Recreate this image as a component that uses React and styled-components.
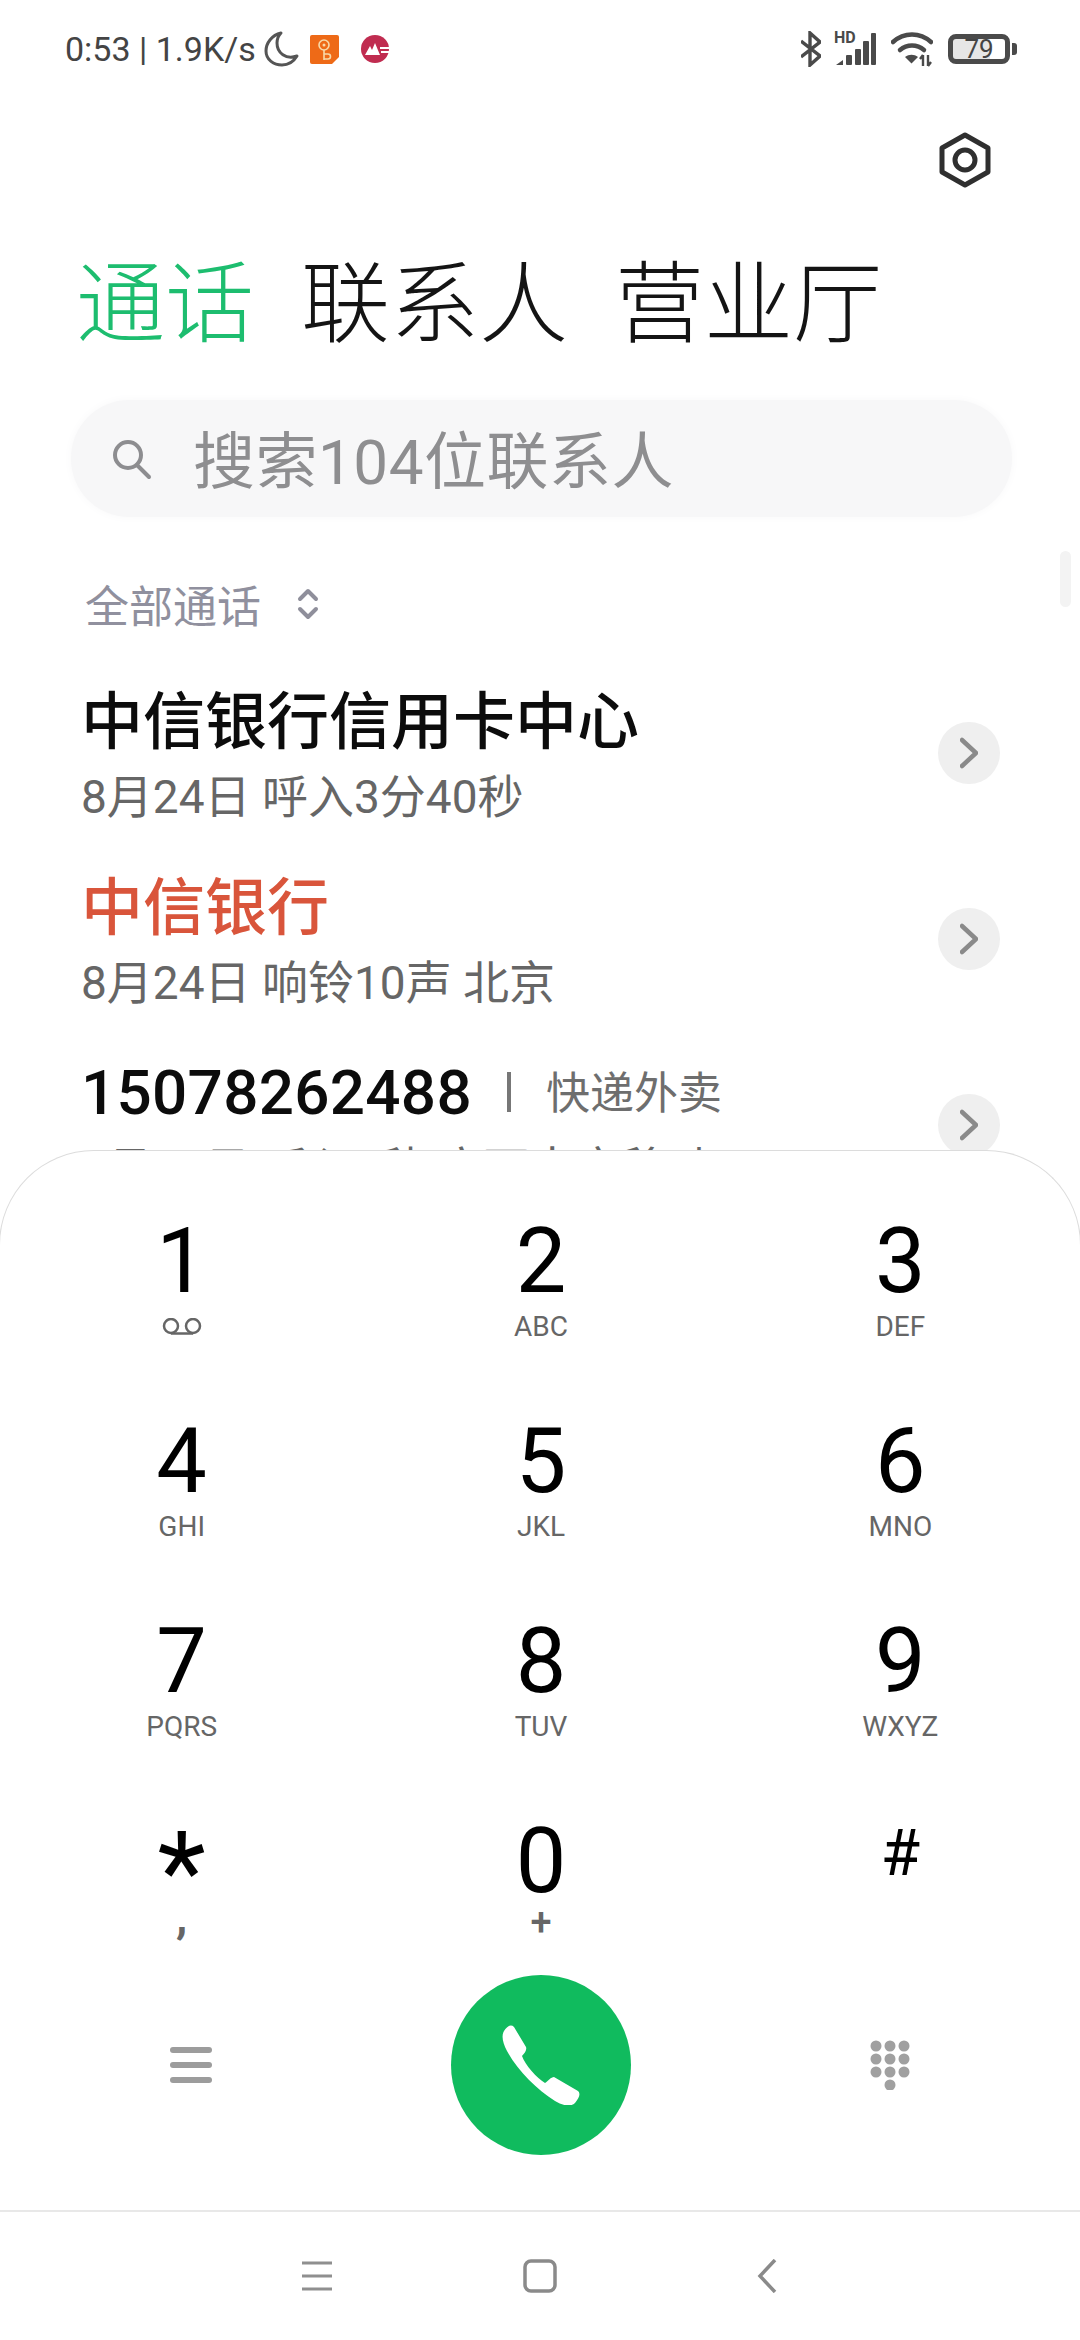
import React from "react";
import styled, { createGlobalStyle } from "styled-components";

const FONT = `Roboto, "Noto Sans CJK SC", sans-serif`;

const GlobalStyle = createGlobalStyle`
  html, body {
    margin: 0;
    padding: 0;
    background: #fff;
  }
  * {
    box-sizing: border-box;
  }
`;

const Page = styled.div`
  position: relative;
  width: 1080px;
  height: 2340px;
  overflow: hidden;
  background: #fff;
  font-family: ${FONT};
`;

const StatusBar = styled.div`
  display: flex;
  align-items: center;
  justify-content: space-between;
  height: 100px;
  padding: 0 70px 2px 65px;
  color: #444;
`;

const StatusGroup = styled.div`
  display: flex;
  align-items: center;
`;

const StatusText = styled.span`
  font-size: 34px;
  line-height: 40px;
  margin-right: 8px;
  white-space: nowrap;
`;

const AppIcon = styled.svg`
  display: block;
  margin-left: ${({ $gap }) => $gap}px;
`;

const SignalBox = styled.div`
  position: relative;
  width: 42px;
  height: 34px;
  margin-left: 13px;
`;

const HdLabel = styled.span`
  position: absolute;
  left: 0;
  top: -2px;
  font-size: 16px;
  line-height: 16px;
  font-weight: 700;
  color: #4a4a4a;
`;

const Battery = styled.div`
  position: relative;
  display: flex;
  align-items: center;
  justify-content: center;
  width: 62px;
  height: 30px;
  margin-left: 15px;
  border: 5px solid #4a4a4a;
  border-radius: 8px;
  font-size: 26px;
  color: #444;
  background: linear-gradient(to right, #e6e6e6 0 72%, #fff 72%);

  &::after {
    content: "";
    position: absolute;
    right: -12px;
    top: 4px;
    width: 5px;
    height: 12px;
    border-radius: 0 3px 3px 0;
    background: #4a4a4a;
  }
`;

const TopBar = styled.div`
  display: flex;
  justify-content: flex-end;
  align-items: center;
  height: 120px;
  padding-right: 88px;
`;

const Tabs = styled.div`
  display: flex;
  align-items: center;
  gap: 47px;
  height: 166px;
  padding: 4px 0 0 76px;
`;

const Tab = styled.div`
  font-size: 89px;
  line-height: 100px;
  font-weight: 300;
  color: ${({ $active }) => ($active ? "#1dbd6f" : "#141414")};
`;

const SearchBar = styled.div`
  display: flex;
  align-items: center;
  height: 117px;
  margin: 14px 68px 0 71px;
  padding-left: 41px;
  border-radius: 58px;
  background: #f7f7f8;
  box-shadow: 0 0 10px #f8f8f9;
`;

const SearchText = styled.span`
  margin-left: 41px;
  padding-top: 8px;
  font-size: 62px;
  line-height: 70px;
  letter-spacing: 0.5px;
  color: #8e8e90;
`;

const Filter = styled.div`
  display: flex;
  align-items: center;
  gap: 36px;
  height: 110px;
  margin-top: 33px;
  padding: 0 0 2px 85px;
  font-size: 44px;
  color: #90909e;
`;

const List = styled.div`
  display: flex;
  flex-direction: column;
`;

const Row = styled.div`
  display: flex;
  align-items: center;
  justify-content: space-between;
  height: 186px;
  padding: 0 80px 0 81px;
`;

const RowBody = styled.div`
  display: flex;
  flex-direction: column;
  gap: 11px;
  margin-top: 5px;
`;

const TitleLine = styled.div`
  display: flex;
  align-items: center;
  height: 72px;
`;

const Title = styled.span`
  margin-bottom: ${({ $number }) => ($number ? 0 : 6)}px;
  font-size: 62px;
  font-weight: 500;
  letter-spacing: ${({ $number }) => ($number ? 0.3 : 0)}px;
  color: ${({ $missed }) => ($missed ? "#d9553b" : "#0c0c0c")};
`;

const Divider = styled.span`
  width: 4px;
  height: 40px;
  margin: 0 35px 0 35px;
  background: #777;
`;

const Tag = styled.span`
  margin-bottom: 4px;
  font-size: 44px;
  color: #6e6e6e;
`;

const Sub = styled.div`
  height: 60px;
  font-size: 46px;
  line-height: 60px;
  color: #666;
  white-space: pre;
`;

const RowArrow = styled.div`
  display: flex;
  align-items: center;
  justify-content: center;
  width: 62px;
  height: 62px;
  border-radius: 50%;
  background: #efefef;
`;

const ScrollThumb = styled.div`
  position: absolute;
  top: 551px;
  right: 9px;
  width: 11px;
  height: 56px;
  border-radius: 6px;
  background: #f3f3f3;
`;

const Panel = styled.div`
  position: absolute;
  left: -1px;
  right: -1px;
  bottom: 0;
  height: 1190px;
  display: flex;
  flex-direction: column;
  padding-top: 61px;
  background: #fff;
  border: 1px solid #dcdcdc;
  border-bottom: none;
  border-radius: 95px 95px 0 0;
`;

const Keys = styled.div`
  display: grid;
  grid-template-columns: repeat(3, 1fr);
  row-gap: 70px;
  padding-left: 2px;
`;

const Key = styled.div`
  display: flex;
  flex-direction: column;
  align-items: center;
  height: 130px;
`;

const Digit = styled.div`
  height: 100px;
  padding-top: ${({ $drop }) => $drop || 0}px;
  font-size: ${({ $size }) => $size || 90}px;
  line-height: ${({ $line }) => $line || 100}px;
  color: #000;
`;

const Letters = styled.div`
  display: flex;
  align-items: center;
  height: ${({ $line }) => $line || 30}px;
  font-size: ${({ $size }) => $size || 28}px;
  font-weight: ${({ $weight }) => $weight || 400};
  line-height: ${({ $line }) => $line || 30}px;
  color: #666;
`;

const Actions = styled.div`
  display: flex;
  align-items: center;
  justify-content: space-between;
  margin-top: 33px;
  padding: 0 170px;
`;

const MenuBars = styled.div`
  display: flex;
  flex-direction: column;
  gap: 9px;
  width: 42px;
`;

const MenuBar = styled.span`
  height: 6px;
  border-radius: 3px;
  background: #9c9c9c;
`;

const CallButton = styled.div`
  display: flex;
  align-items: center;
  justify-content: center;
  width: 180px;
  height: 180px;
  border-radius: 50%;
  background: #10bb5e;
`;

const NavBar = styled.div`
  display: flex;
  align-items: center;
  justify-content: center;
  gap: 185px;
  height: 130px;
  margin-top: auto;
  border-top: 2px solid #e8e8e8;
`;

const STATUS_COLOR = "#4a4a4a";

const MoonIcon = () => (
  <svg width="36" height="36" viewBox="0 0 36 36" fill="none" stroke="#555" strokeWidth="3" strokeLinejoin="round">
    <path d="M17 2C8 4 2 12 2 20c0 9 8 14 16 14 7 0 12-4 15-9-11 4-20-3-20-13 0-4 2-8 4-10z" />
  </svg>
);

const OrangeIcon = () => (
  <AppIcon $gap={10} width="29" height="29" viewBox="0 0 29 29">
    <path d="M2 0h25a2 2 0 0 1 2 2v20l-7 7H2a2 2 0 0 1-2-2V2a2 2 0 0 1 2-2z" fill="#ee6a17" />
    <g fill="none" stroke="#f8d9a8" strokeWidth="1.6">
      <circle cx="14" cy="10" r="5" />
      <path d="M14 15v10M14 19h4a2 2 0 0 1 0 5h-4" />
    </g>
    <circle cx="14" cy="10" r="1.5" fill="#f8d9a8" />
  </AppIcon>
);

const BankIcon = () => (
  <AppIcon $gap={22} width="28" height="28" viewBox="0 0 28 28">
    <circle cx="14" cy="14" r="14" fill="#c02c50" />
    <path d="M4 20l5-9 2 4 3-7 5 12z" fill="#fff" />
    <path d="M19 12h9v2h-9zM20 16h8v2h-8z" fill="#fff" />
  </AppIcon>
);

const Bluetooth = () => (
  <svg width="20" height="36" viewBox="0 0 20 36" fill="none" stroke={STATUS_COLOR} strokeWidth="3.4">
    <path d="M0 10l19 15-10 9V2l10 9L0 26" />
  </svg>
);

const SignalBars = () => (
  <svg width="42" height="34" viewBox="0 0 42 34" fill={STATUS_COLOR}>
    <path d="M2 33l7-5v5z" />
    <rect x="12" y="23" width="6" height="10" rx="1" />
    <rect x="21" y="17" width="6" height="16" rx="1" />
    <rect x="29" y="9" width="6" height="24" rx="1" />
    <rect x="37" y="1" width="5" height="32" rx="1" />
  </svg>
);

const Wifi = () => (
  <AppIcon $gap={15} width="42" height="36" viewBox="0 0 42 36">
    <g fill="none" stroke={STATUS_COLOR} strokeWidth="4.500" strokeLinecap="round">
      <path d="M2 11c11-10 27-10 38 0" />
      <path d="M9 19c7-6 17-6 24 0" />
    </g>
    <path d="M14 26c4-3 9-3 13 0l-6.500 6.500z" fill={STATUS_COLOR} />
    <g stroke={STATUS_COLOR} strokeWidth="2.400" fill="none">
      <path d="M32 24v11M32 24l-3 4" />
      <path d="M37 35V24M37 35l3-4" />
    </g>
  </AppIcon>
);

const GearIcon = () => (
  <svg width="54" height="56" viewBox="0 0 54 56" fill="none" stroke="#2f2f2f" strokeWidth="5" strokeLinejoin="round">
    <path d="M27 3l23 13v24L27 53 4 40V16z" />
    <circle cx="27" cy="28" r="10" />
  </svg>
);

const SearchIcon = () => (
  <svg width="40" height="42" viewBox="0 0 40 42" fill="none" stroke="#8d8d90" strokeWidth="4" strokeLinecap="round">
    <circle cx="16" cy="17" r="13" />
    <path d="M26 28l11 11" />
  </svg>
);

const UpDown = () => (
  <svg width="22" height="32" viewBox="0 0 22 32" fill="none" stroke="#8f8f9b" strokeWidth="4" strokeLinecap="round" strokeLinejoin="round">
    <path d="M3 11l8-8 8 8M3 21l8 8 8-8" />
  </svg>
);

const Chevron = () => (
  <svg width="18" height="32" viewBox="0 0 18 32" fill="none" stroke="#8a8a8a" strokeWidth="4.500" strokeLinecap="round" strokeLinejoin="round">
    <path d="M2 3l14 13L2 29" />
  </svg>
);

const Voicemail = () => (
  <svg width="40" height="18" viewBox="0 0 40 18" fill="none" stroke="#666" strokeWidth="2.500">
    <circle cx="9" cy="8" r="7" />
    <circle cx="31" cy="8" r="7" />
    <path d="M9 15.500h22" />
  </svg>
);

const PhoneIcon = () => (
  <svg width="80" height="80" viewBox="0 0 80 80" fill="#fff">
    <path d="M3 6C6 1 10-1 13 2l12 20c1 3-1 6-4 9 3 9 15 22 23 27 3-2 6-6 9-6l24 14c3 3 1 7-3 12-4 4-12 3-20-2C36 65 16 45 6 26 2 18 0 11 3 6z" />
  </svg>
);

const DialpadIcon = () => (
  <svg width="40" height="50" viewBox="0 0 40 50" fill="#a0a0a0">
    {[6, 20, 34].map((x) =>
      [6, 19, 32].map((y) => <circle key={`${x}-${y}`} cx={x} cy={y} r="5.500" />)
    )}
    <circle cx="20" cy="45" r="5.500" />
  </svg>
);

const NavMenu = () => (
  <svg width="40" height="34" viewBox="0 0 40 34" stroke="#8f8f8f" strokeWidth="3">
    <path d="M7 4h30M7 17h30M7 30h30" />
  </svg>
);

const NavHome = () => (
  <svg width="40" height="34" viewBox="0 0 40 34" fill="none" stroke="#8a8a8a" strokeWidth="3.500">
    <rect x="5" y="2" width="30" height="30" rx="6" />
  </svg>
);

const NavBack = () => (
  <svg width="40" height="34" viewBox="0 0 40 34" fill="none" stroke="#8a8a8a" strokeWidth="3.500">
    <path d="M30 1L15 17l15 16" />
  </svg>
);

const calls = [
  { id: 1, title: "中信银行信用卡中心", sub: "8月24日 呼入3分40秒" },
  { id: 2, title: "中信银行", missed: true, sub: "8月24日 响铃10声 北京" },
  { id: 3, title: "15078262488", number: true, tag: "快递外卖", sub: "8月24日 呼入1秒 广西南宁移动" },
];

const keys = [
  { digit: "1", icon: true },
  { digit: "2", letters: "ABC" },
  { digit: "3", letters: "DEF" },
  { digit: "4", letters: "GHI" },
  { digit: "5", letters: "JKL" },
  { digit: "6", letters: "MNO" },
  { digit: "7", letters: "PQRS" },
  { digit: "8", letters: "TUV" },
  { digit: "9", letters: "WXYZ" },
  { digit: "*", letters: ",", size: 112, line: 60, drop: 30, letterSize: 46, letterLine: 10, letterWeight: 700 },
  { digit: "0", letters: "+", letterSize: 38, letterLine: 20, letterWeight: 500 },
  { digit: "#", size: 64, line: 84 },
];

const App = () => {
  return (
    <Page>
      <GlobalStyle />
      <StatusBar>
        <StatusGroup>
          <StatusText>0:53 | 1.9K/s</StatusText>
          <MoonIcon />
          <OrangeIcon />
          <BankIcon />
        </StatusGroup>
        <StatusGroup>
          <Bluetooth />
          <SignalBox>
            <SignalBars />
            <HdLabel>HD</HdLabel>
          </SignalBox>
          <Wifi />
          <Battery>79</Battery>
        </StatusGroup>
      </StatusBar>
      <TopBar>
        <GearIcon />
      </TopBar>
      <Tabs>
        <Tab $active>通话</Tab>
        <Tab>联系人</Tab>
        <Tab>营业厅</Tab>
      </Tabs>
      <SearchBar>
        <SearchIcon />
        <SearchText>搜索104位联系人</SearchText>
      </SearchBar>
      <Filter>
        全部通话
        <UpDown />
      </Filter>
      <List>
        {calls.map((call) => (
          <Row key={call.id}>
            <RowBody>
              <TitleLine>
                <Title $missed={call.missed} $number={call.number}>{call.title}</Title>
                {call.tag && <Divider />}
                {call.tag && <Tag>{call.tag}</Tag>}
              </TitleLine>
              <Sub>{call.sub}</Sub>
            </RowBody>
            <RowArrow>
              <Chevron />
            </RowArrow>
          </Row>
        ))}
      </List>
      <ScrollThumb />
      <Panel>
        <Keys>
          {keys.map((key) => (
            <Key key={key.digit}>
              <Digit $size={key.size} $line={key.line} $drop={key.drop}>{key.digit}</Digit>
              <Letters $size={key.letterSize} $line={key.letterLine} $weight={key.letterWeight}>
                {key.icon ? <Voicemail /> : key.letters}
              </Letters>
            </Key>
          ))}
        </Keys>
        <Actions>
          <MenuBars>
            <MenuBar />
            <MenuBar />
            <MenuBar />
          </MenuBars>
          <CallButton>
            <PhoneIcon />
          </CallButton>
          <DialpadIcon />
        </Actions>
        <NavBar>
          <NavMenu />
          <NavHome />
          <NavBack />
        </NavBar>
      </Panel>
    </Page>
  );
};

export default App;
